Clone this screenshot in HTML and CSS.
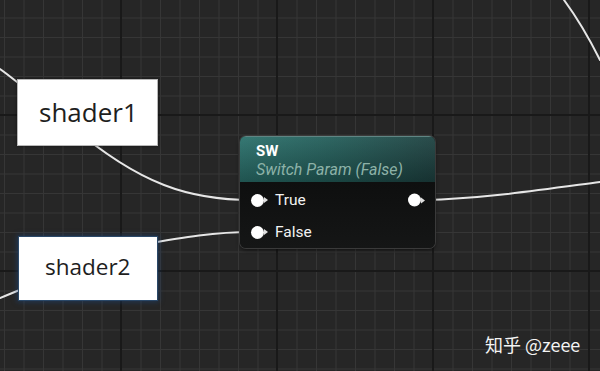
FILE: index.html
```html
<!DOCTYPE html>
<html>
<head>
<meta charset="utf-8">
<link rel="stylesheet" href="styles.css">
</head>
<body>
<div class="canvas">
  <svg class="wires" width="600" height="371" viewBox="0 0 600 371">
    <g fill="none" stroke="#e6e6e6" stroke-width="2" stroke-linecap="round">
      <path d="M0,69 C6,73 12,78 22,86"/>
      <path d="M70,125 C140,185 190,200 252,200"/>
      <path d="M140,245 C185,237 215,232 252,232"/>
      <path d="M0,298 C8,295 14,292 25,288"/>
      <path d="M424,200 C480,199 540,190 600,182"/>
      <path d="M564,0 C575,15 590,40 600,60"/>
    </g>
  </svg>

  <div class="label label-1">shader1</div>
  <div class="label label-2">shader2</div>

  <div class="node">
    <div class="node-head">
      <div class="node-title">SW</div>
      <div class="node-sub">Switch Param (False)</div>
    </div>
    <div class="node-body">
      <div class="row">
        <div class="pin-in"><span class="pin"></span><span class="arrow"></span></div>
        <span class="pin-label">True</span>
        <div class="pin-out"><span class="pin"></span><span class="arrow"></span></div>
      </div>
      <div class="row">
        <div class="pin-in"><span class="pin"></span><span class="arrow"></span></div>
        <span class="pin-label">False</span>
      </div>
    </div>
  </div>

  <div class="watermark">知乎 @zeee</div>
</div>
</body>
</html>
```

FILE: styles.css
```css
html, body {
  margin: 0;
  padding: 0;
  background: #262626;
}

.canvas {
  position: relative;
  width: 600px;
  height: 371px;
  overflow: hidden;
  background-color: #262626;
  background-image:
    linear-gradient(to right, #191919 2px, transparent 2px),
    linear-gradient(to bottom, #191919 2px, transparent 2px),
    linear-gradient(to right, #363636 1px, transparent 1px),
    linear-gradient(to bottom, #363636 1px, transparent 1px);
  background-size: 156px 156px, 156px 156px, 19.5px 19.5px, 19.5px 19.5px;
  background-position: 120px 0, 0 114px, 4px 0, 0 -2px;
}

.wires {
  position: absolute;
  left: 0;
  top: 0;
}

.label {
  position: absolute;
  background: #ffffff;
  color: #1e1e1e;
  font-family: "Open Sans", "Noto Sans", sans-serif;
  display: flex;
  align-items: center;
  box-sizing: border-box;
}

.label-1 {
  left: 18px;
  top: 80px;
  width: 139px;
  height: 65px;
  font-size: 26px;
  padding-left: 21px;
  padding-bottom: 2px;
  box-shadow: 0 0 0 1px #b8b8b8, 0 0 3px 1px rgba(0, 0, 0, 0.5);
}

.label-2 {
  left: 19px;
  top: 237px;
  width: 138px;
  height: 63px;
  font-size: 22.5px;
  padding-left: 26px;
  padding-bottom: 4px;
  box-shadow: 0 0 0 1px #2a4868, 0 0 5px 2px rgba(30, 70, 120, 0.55);
}

.node {
  position: absolute;
  left: 240px;
  top: 136px;
  width: 195px;
  height: 112px;
  border-radius: 6px;
  overflow: hidden;
  background: #121313;
  box-shadow: 0 0 0 1px #3a3a3a, 0 2px 4px rgba(0, 0, 0, 0.6);
  font-family: Roboto, "Liberation Sans", sans-serif;
  display: flex;
  flex-direction: column;
}

.node-head {
  height: 46px;
  box-sizing: border-box;
  padding: 5px 0 0 16px;
  background:
    linear-gradient(to bottom, rgba(255, 255, 255, 0.06), rgba(0, 0, 0, 0.25)),
    linear-gradient(to right, #2a706b 0%, #225d59 45%, #1d4140 100%);
  border-top: 1px solid #5f8583;
}

.node-title {
  color: #ffffff;
  font-weight: bold;
  font-size: 15px;
  line-height: 18px;
}

.node-sub {
  color: #8db2a8;
  font-style: italic;
  font-size: 16px;
  line-height: 20px;
}

.node-body {
  flex: 1;
  padding-top: 2px;
  background: linear-gradient(to bottom, #0e0f0f, #151616);
}

.row {
  position: relative;
  height: 32px;
  display: flex;
  align-items: center;
}

.pin-in {
  display: flex;
  align-items: center;
  margin-left: 11px;
  width: 24px;
}

.pin {
  width: 13px;
  height: 13px;
  border-radius: 50%;
  background: radial-gradient(circle at 45% 45%, #ffffff 55%, #cfcfcf 100%);
}

.arrow {
  width: 0;
  height: 0;
  border-left: 4px solid #e0e0e0;
  border-top: 3px solid transparent;
  border-bottom: 3px solid transparent;
}

.pin-label {
  color: #f2f2f2;
  font-size: 15.5px;
}

.pin-out {
  position: absolute;
  left: 168px;
  top: 50%;
  transform: translateY(-50%);
  display: flex;
  align-items: center;
}

.watermark {
  position: absolute;
  left: 485px;
  top: 333px;
  color: #f4f4f4;
  font-family: "Noto Sans CJK SC", "Noto Sans", sans-serif;
  font-size: 18px;
  line-height: 22px;
  white-space: nowrap;
}
```
